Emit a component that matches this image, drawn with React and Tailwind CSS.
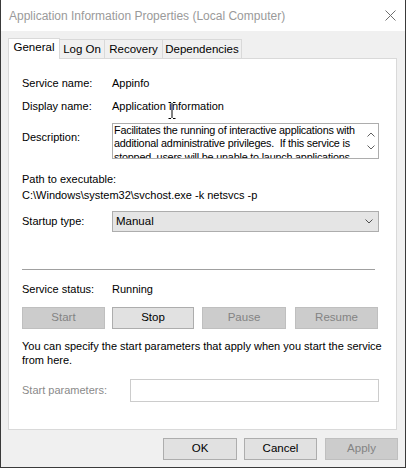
const FONT = { fontFamily: '"Liberation Sans", Arial, sans-serif' };

function Btn({ children, disabled, className = '' }) {
  return (
    <div
      className={`flex items-center justify-center border text-[11.5px] ${
        disabled ? 'bg-[#cccccc] border-[#bfbfbf] text-[#838383]' : 'bg-[#e1e1e1] border-[#adadad] text-black'
      } ${className}`}
    >
      {children}
    </div>
  );
}

function Chevron({ up, className = '' }) {
  return (
    <svg className={className} width="8" height="5" viewBox="0 0 8 5" fill="none" stroke="currentColor" strokeWidth="1">
      {up ? <path d="M0.5 4.5 L4 1 L7.5 4.5" /> : <path d="M0.5 0.5 L4 4 L7.5 0.5" />}
    </svg>
  );
}

export default function App() {
  return (
    <div style={FONT} className="w-[406px] h-[468px] bg-[#f0f0f0] border-x border-b border-[#3a3a3a] text-[11px] text-black flex flex-col overflow-hidden">
      {/* Title bar */}
      <div className="h-[31px] bg-white flex items-center justify-between pl-[8px] pr-[9px] shrink-0">
        <span className="text-[12px] text-[#9a9a9a]">Application Information Properties (Local Computer)</span>
        <svg width="11" height="11" viewBox="0 0 11 11" stroke="#6e6e6e" strokeWidth="1">
          <path d="M0.5 0.5 L10.5 10.5 M10.5 0.5 L0.5 10.5" />
        </svg>
      </div>

      <div className="pl-[7px] pt-[7px]">
        {/* Tabs */}
        <div className="flex items-end h-[20px] relative z-10 text-[11.5px]">
          <div className="w-[52px] h-[21px] -mb-px bg-white border-x border-t border-[#d9d9d9] flex items-center justify-center pb-[2px]">
            General
          </div>
          <div className="w-[46px] h-[19px] -ml-px border-x border-t border-[#d9d9d9] flex items-center justify-center pt-[1px]">Log On</div>
          <div className="w-[59px] h-[19px] -ml-px border-x border-t border-[#d9d9d9] flex items-center justify-center pt-[1px]">Recovery</div>
          <div className="w-[80px] h-[19px] -ml-px border-x border-t border-[#d9d9d9] flex items-center justify-center pt-[1px]">Dependencies</div>
        </div>

        {/* Panel */}
        <div className="w-[389px] h-[372px] bg-white border border-[#d9d9d9] pl-[13px] pt-[16px] relative">
          <div className="flex h-[16px] items-center">
            <span className="w-[90px]">Service name:</span>
            <span>Appinfo</span>
          </div>
          <div className="flex h-[16px] items-center mt-[7px] relative">
            <span className="w-[90px]">Display name:</span>
            <span>Application Information</span>
            {/* I-beam cursor */}
            <svg className="absolute left-[146px] top-[4px]" width="8" height="17" viewBox="0 0 8 17" fill="none">
              <path d="M0.5 0.5 H3 M5 0.5 H7.5 M4 1 V16 M0.5 16.5 H3 M5 16.5 H7.5" stroke="#ffffff" strokeWidth="2" />
              <path d="M0.5 0.5 H3 M5 0.5 H7.5 M4 1 V16 M0.5 16.5 H3 M5 16.5 H7.5" stroke="#000" strokeWidth="1" />
            </svg>
          </div>
          <div className="flex mt-[9px]">
            <span className="w-[90px] pt-[6px]">Description:</span>
            <div className="w-[267px] h-[36px] border border-[#adadad] flex overflow-hidden">
              <div className="flex-1 pl-[1px] leading-[13.4px] overflow-hidden whitespace-nowrap tracking-[-0.2px] text-[10.8px]">
                Facilitates the running of interactive applications with
                <br />
                additional administrative privileges.&nbsp; If this service is
                <br />
                stopped, users will be unable to launch applications
              </div>
              <div className="w-[14px] shrink-0 flex flex-col items-center justify-between py-[8px] text-[#606060]">
                <Chevron up />
                <Chevron />
              </div>
            </div>
          </div>

          <div className="mt-[12px] h-[16px] flex items-center">Path to executable:</div>
          <div className="h-[16px] flex items-center">C:\Windows\system32\svchost.exe -k netsvcs -p</div>

          <div className="flex items-center mt-[8px]">
            <span className="w-[90px]">Startup type:</span>
            <div className="w-[267px] h-[21px] bg-[#e5e5e5] border border-[#adadad] flex items-center justify-between pl-[3px] pr-[5px] text-[11.5px]">
              <span>Manual</span>
              <Chevron className="text-[#505050]" />
            </div>
          </div>

          <div className="w-[353px] h-px bg-[#a0a0a0] mt-[37px]" />

          <div className="flex h-[16px] items-center mt-[11px]">
            <span className="w-[90px]">Service status:</span>
            <span>Running</span>
          </div>

          <div className="flex mt-[10px] h-[22px]">
            <Btn disabled className="w-[83px]">Start</Btn>
            <Btn className="w-[82px] ml-[7px]">Stop</Btn>
            <Btn disabled className="w-[84px] ml-[8px]">Pause</Btn>
            <Btn disabled className="w-[83px] ml-[9px]">Resume</Btn>
          </div>

          <div className="mt-[10px] w-[360px] leading-[14px]">
            You can specify the start parameters that apply when you start the service
            <br />
            from here.
          </div>

          <div className="flex items-center mt-[12px]">
            <span className="w-[108px] text-[#8a8a8a]">Start parameters:</span>
            <div className="w-[249px] h-[23px] border border-[#cccccc] bg-white" />
          </div>
        </div>

        {/* Dialog buttons */}
        <div className="flex mt-[8px] pl-[155px] h-[22px]">
          <Btn className="w-[74px]">OK</Btn>
          <Btn className="w-[73px] ml-[7px]">Cancel</Btn>
          <Btn disabled className="w-[73px] ml-[8px]">Apply</Btn>
        </div>
      </div>
    </div>
  );
}
